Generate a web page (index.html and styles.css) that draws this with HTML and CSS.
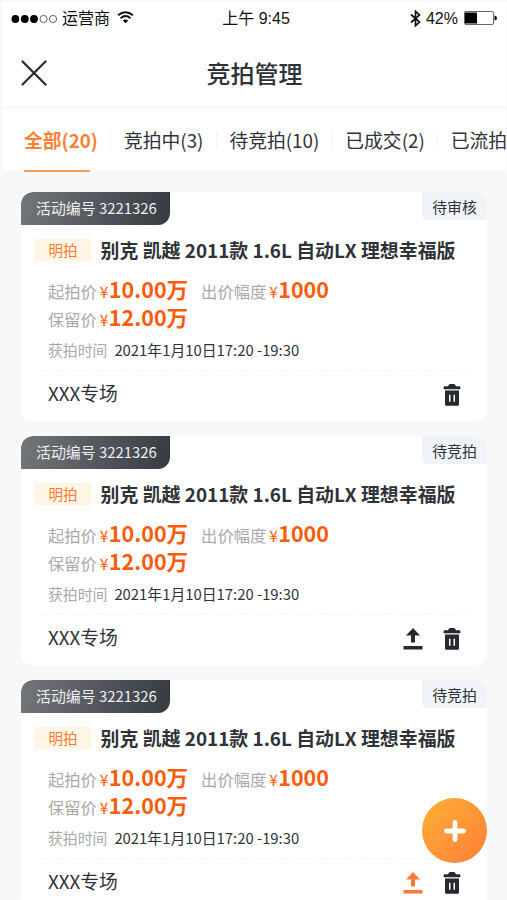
FILE: index.html
```html
<!DOCTYPE html>
<html lang="zh-CN">
<head>
    <meta charset="UTF-8">
    <meta name="viewport" content="width=device-width, initial-scale=1.0">
    <title>竞拍管理</title>
    <link rel="stylesheet" href="styles.css">
</head>
<body>
    <svg class="sprite" width="0" height="0">
        <symbol id="icon-trash" viewBox="0 0 18 24">
            <path d="M5 3.2L6 1.4Q6.3 1 7 1H11Q11.7 1 12 1.4L13 3.2H16.2Q17.4 3.2 17.4 4.4V6.2H.6V4.4Q.6 3.2 1.8 3.2Z"/>
            <path fill-rule="evenodd" d="M2 7.4H16V21.5Q16 22.8 14.7 22.8H3.3Q2 22.8 2 21.5ZM6 11.8V18.8H7.5V11.8ZM10.5 11.8V18.8H12V11.8Z"/>
        </symbol>
        <symbol id="icon-upload" viewBox="0 0 20 22">
            <path d="M10 0L17 7.5H12V14.5H8V7.5H3Z"/>
            <path d="M.5 18H19.5V21.5H.5Z"/>
        </symbol>
    </svg>

    <div class="top">
        <div class="status-bar">
            <div class="status-left">
                <svg width="46" height="10" viewBox="0 0 46 10">
                    <circle cx="4.4" cy="5" r="3.9"/>
                    <circle cx="13.8" cy="5" r="3.9"/>
                    <circle cx="23" cy="5" r="3.9"/>
                    <circle cx="32.6" cy="5" r="3.6" fill="none" stroke="#222" stroke-width=".7"/>
                    <circle cx="42" cy="5" r="3.6" fill="none" stroke="#222" stroke-width=".7"/>
                </svg>
                <span class="carrier">运营商</span>
                <svg class="wifi" width="17" height="13" viewBox="0 0 17 13">
                    <path d="M1 4.3Q8.5-2 16 4.3M3.6 7.2Q8.5 3 13.4 7.2" fill="none" stroke="#111" stroke-width="1.9"/>
                    <path d="M5.8 9.5Q8.5 7.4 11.2 9.5L8.5 12.2Z"/>
                </svg>
            </div>
            <div class="status-time">上午 9:45</div>
            <div class="status-right">
                <svg width="11" height="17" viewBox="0 0 11 17">
                    <path d="M1 4.5L9.5 12L5.5 15.7V1.3L9.5 5L1 12.5" fill="none" stroke="#111" stroke-width="1.7"/>
                </svg>
                <span>42%</span>
                <svg class="battery" width="33" height="14" viewBox="0 0 33 14">
                    <rect x=".5" y=".5" width="29" height="13" rx="1.5" fill="none" stroke="#555" stroke-width=".9"/>
                    <rect x="1" y="1.5" width="12" height="11"/>
                    <path d="M30.5 4.5Q33 5 33 7Q33 9 30.5 9.5Z"/>
                </svg>
            </div>
        </div>
        <div class="nav">
            <svg class="close" width="26" height="26" viewBox="0 0 26 26">
                <path d="M1.5 1.5L24.5 24.5M24.5 1.5L1.5 24.5"/>
            </svg>
            <h1>竞拍管理</h1>
        </div>
    </div>

    <div class="tabs">
        <div class="tab active">全部(20)</div>
        <div class="tab">竞拍中(3)</div>
        <div class="tab">待竞拍(10)</div>
        <div class="tab">已成交(2)</div>
        <div class="tab">已流拍</div>
    </div>

    <div class="list">
        <div class="card">
            <div class="card-head">
                <div class="number">活动编号 3221326</div>
                <div class="state">待审核</div>
            </div>
            <div class="car"><span class="tag">明拍</span><h2>别克 凯越 2011款 1.6L 自动LX 理想幸福版</h2></div>
            <div class="price-row">
                <span class="label">起拍价</span><span class="yen">¥</span><b>10.00万</b>
                <span class="label step">出价幅度</span><span class="yen">¥</span><b>1000</b>
            </div>
            <div class="price-row">
                <span class="label">保留价</span><span class="yen">¥</span><b>12.00万</b>
            </div>
            <div class="time-row"><span>获拍时间</span>2021年1月10日17:20 -19:30</div>
            <div class="card-foot">
                <div class="place">XXX专场</div>
                <svg class="trash"><use href="#icon-trash"/></svg>
            </div>
        </div>

        <div class="card">
            <div class="card-head">
                <div class="number">活动编号 3221326</div>
                <div class="state">待竞拍</div>
            </div>
            <div class="car"><span class="tag">明拍</span><h2>别克 凯越 2011款 1.6L 自动LX 理想幸福版</h2></div>
            <div class="price-row">
                <span class="label">起拍价</span><span class="yen">¥</span><b>10.00万</b>
                <span class="label step">出价幅度</span><span class="yen">¥</span><b>1000</b>
            </div>
            <div class="price-row">
                <span class="label">保留价</span><span class="yen">¥</span><b>12.00万</b>
            </div>
            <div class="time-row"><span>获拍时间</span>2021年1月10日17:20 -19:30</div>
            <div class="card-foot">
                <div class="place">XXX专场</div>
                <svg class="upload"><use href="#icon-upload"/></svg>
                <svg class="trash"><use href="#icon-trash"/></svg>
            </div>
        </div>

        <div class="card">
            <div class="card-head">
                <div class="number">活动编号 3221326</div>
                <div class="state">待竞拍</div>
            </div>
            <div class="car"><span class="tag">明拍</span><h2>别克 凯越 2011款 1.6L 自动LX 理想幸福版</h2></div>
            <div class="price-row">
                <span class="label">起拍价</span><span class="yen">¥</span><b>10.00万</b>
                <span class="label step">出价幅度</span><span class="yen">¥</span><b>1000</b>
            </div>
            <div class="price-row">
                <span class="label">保留价</span><span class="yen">¥</span><b>12.00万</b>
            </div>
            <div class="time-row"><span>获拍时间</span>2021年1月10日17:20 -19:30</div>
            <div class="card-foot">
                <div class="place">XXX专场</div>
                <svg class="upload on"><use href="#icon-upload"/></svg>
                <svg class="trash"><use href="#icon-trash"/></svg>
            </div>
        </div>
    </div>

    <!-- floating add button -->
    <div class="add">
        <svg width="22" height="22" viewBox="0 0 22 22">
            <path d="M11 2.4V19.6M2.4 11H19.6"/>
        </svg>
    </div>
</body>
</html>
```
FILE: styles.css
```css
* {
    box-sizing: border-box;
}
body {
    margin: 0;
    padding: 2px 1px 0 2px;
    height: 900px;
    overflow: hidden;
    background: #f8f8f8;
    color: #2f3338;
    font-family: "Noto Sans CJK SC", sans-serif;
}
h1, h2 {
    margin: 0;
}
svg {
    display: block;
    flex: none;
}
.sprite {
    position: absolute;
}

/* status bar + title */
.top {
    height: 104px;
    background: #fff;
}
.status-bar {
    display: grid;
    grid-template-columns: 1fr auto 1fr;
    align-items: center;
    height: 33px;
    padding: 0 9px;
    color: #111;
    font-size: 16px;
    line-height: 24px;
    font-family: "Liberation Sans", "Noto Sans CJK SC", sans-serif;
}
.status-left, .status-right {
    display: flex;
    align-items: center;
}
.status-right {
    justify-content: flex-end;
}
.status-time {
    padding: 1px 0 0 4px;
}
.carrier {
    margin: 0 7px 0 5px;
}
.wifi {
    margin-bottom: 3px;
}
.status-right span {
    margin: 0 6px 0 5px;
}
.battery {
    margin-bottom: 1px;
}
.nav {
    display: grid;
    grid-template-columns: 60px 1fr 60px;
    align-items: center;
    height: 76px;
}
.close {
    margin-left: 19px;
    fill: none;
    stroke: #2b2b2b;
    stroke-width: 2.2;
    stroke-linecap: round;
}
.nav h1 {
    padding: 0 0 1px 1px;
    text-align: center;
    font-size: 24px;
    line-height: 36px;
    font-weight: 500;
}

/* tabs */
.tabs {
    display: flex;
    height: 62px;
    margin-top: 3px;
    padding-left: 22px;
    background: #fff;
    white-space: nowrap;
    font-size: 18.8px;
    line-height: 60px;
}
.tab {
    display: flex;
    align-items: center;
    height: 61px;
    flex: none;
}
.tab + .tab::before {
    content: "";
    width: 1px;
    height: 18px;
    margin: 0 12.5px;
    background: #f4f4f6;
}
.tab.active {
    color: #ff7f35;
    font-weight: bold;
    height: 63px;
    padding-bottom: 2px;
    background: linear-gradient(#ff9a5c, #ff9a5c) left bottom / 66px 2px no-repeat;
}

/* cards */
.list {
    padding: 21px 19px 0;
}
.card {
    height: 229px;
    margin-bottom: 15px;
    background: #fff;
    border-radius: 12px;
    overflow: hidden;
}
.card-head {
    display: flex;
    justify-content: space-between;
    height: 33px;
}
.number {
    width: 149px;
    padding-left: 15px;
    background: linear-gradient(100deg, #73767a, #363a42);
    border-radius: 12px 0 12px 0;
    color: #eeeff0;
    font-size: 14.9px;
    line-height: 32px;
}
.state {
    width: 65px;
    height: 28px;
    background: #f0f3f8;
    border-radius: 0 0 0 5px;
    text-align: center;
    font-size: 14.9px;
    line-height: 30px;
}
.car {
    display: flex;
    align-items: center;
    height: 50px;
    padding-left: 13px;
}
.tag {
    width: 58px;
    height: 22px;
    margin-right: 8.6px;
    background: #fff6e6;
    border-radius: 3px;
    color: #ff7a30;
    text-align: center;
    font-size: 14.5px;
    line-height: 22px;
}
.car h2 {
    font-size: 18.9px;
    line-height: 28px;
    white-space: nowrap;
}
.price-row {
    display: flex;
    align-items: baseline;
    height: 28px;
    padding-left: 27px;
    line-height: 28px;
    white-space: nowrap;
    color: #ff5c0a;
}
.label {
    margin-right: 3px;
    color: #a9a9a9;
    font-size: 16.3px;
}
.step {
    margin-left: 13px;
}
.yen {
    width: 9px;
    font-size: 15.5px;
}
.price-row b {
    font-size: 21.5px;
}
.time-row {
    height: 40px;
    margin: 0 20px;
    padding-left: 7px;
    border-bottom: 1px dashed #f3f3f5;
    font-size: 14.85px;
    line-height: 38px;
}
.time-row span {
    margin-right: 7px;
    color: #a9a9a9;
}
.card-foot {
    display: flex;
    align-items: center;
    height: 48px;
    padding: 0 26px 0 27px;
}
.place {
    flex: 1;
    padding-bottom: 4px;
    font-size: 18.8px;
    line-height: 44px;
}
.trash {
    width: 18px;
    height: 24px;
    margin-left: 20px;
    fill: #26292f;
}
.upload {
    width: 20px;
    height: 22px;
    fill: #26292f;
}
.upload.on {
    fill: #ff7a35;
}

.add {
    position: fixed;
    left: 422px;
    top: 798px;
    display: flex;
    align-items: center;
    justify-content: center;
    width: 65px;
    height: 65px;
    border-radius: 50%;
    background: linear-gradient(135deg, #ffb036, #ff7e38);
}
.add path {
    stroke: #fff;
    stroke-width: 4.8;
    stroke-linecap: round;
}
```
